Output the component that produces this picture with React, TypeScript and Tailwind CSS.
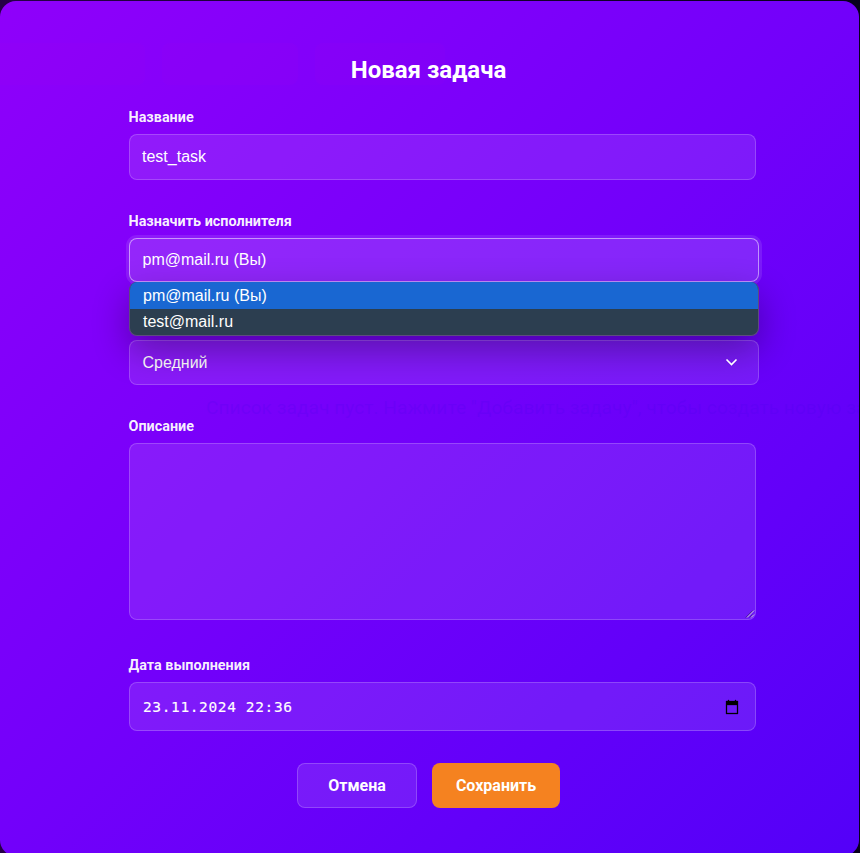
import type { ReactNode } from "react";

const control =
  "rounded-[8px] border border-white/20 bg-white/10 text-[16px] text-white font-['Liberation_Sans',Arial,sans-serif]";

function Label({ children }: { children: ReactNode }) {
  return (
    <div className="-ml-[0.5px] h-[17px] whitespace-nowrap text-[14.4px] font-bold leading-[17px] text-white/95">
      {children}
    </div>
  );
}

function AssigneeOptions() {
  return (
    <div className="absolute left-0 top-[44px] z-10 h-[54px] w-[630px] overflow-hidden rounded-[8px] border border-t-0 border-[#5d4b80] bg-[#2c3e50] font-['Liberation_Sans',Arial,sans-serif] text-[16px] leading-[26px] text-white shadow-[0_14px_36px_rgba(0,0,0,0.32)]">
      <div className="h-[27px] bg-[#1967d2] pl-[13px] pt-px">pm@mail.ru (Вы)</div>
      <div className="h-[26px] pl-[13px] leading-[25px]">test@mail.ru</div>
    </div>
  );
}

export default function App() {
  return (
    <div className="h-[853px] w-[860px] overflow-hidden bg-[#1d003c] bg-linear-to-r from-[#260046] to-[#08001c] pt-px font-[Roboto,sans-serif]">
      <div className="relative h-[855px] w-[859px] overflow-hidden rounded-[16px] bg-[linear-gradient(135deg,#8f00fa_0%,#7200fa_50%,#5300f8_100%)]">
        <div className="absolute left-0 top-[42px] flex gap-[17px]">
          <div className="h-[42px] w-[145px] rounded-r-[8px] bg-[#a000dc]/8" />
          <div className="h-[42px] w-[136px] rounded-[8px] bg-[#a000dc]/8" />
          <div className="h-[42px] w-[130px] rounded-[8px] bg-[#a000dc]/8" />
        </div>
        <div className="absolute left-[206px] top-[395px] whitespace-nowrap text-[19.2px] leading-[24px] text-[#3c00e0]/15">
          Список задач пуст. Нажмите "Добавить задачу", чтобы создать новую задачу
        </div>

        <form className="relative flex flex-col pl-[129px]">
          <h2 className="mr-[131px] mt-[54px] h-[30px] text-center text-[24px] font-bold leading-[30px] text-white">
            Новая задача
          </h2>

          <div className="mt-[24px]">
            <Label>Название</Label>
            <div className={`${control} mt-[8px] flex h-[46px] w-[627px] items-center px-[12px]`}>
              test_task
            </div>
          </div>

          <div className="mt-[33px]">
            <Label>Назначить исполнителя</Label>
            <div className="relative mt-[8px]">
              <div className="flex h-[44px] w-[630px] items-center rounded-[8px] border border-white/50 bg-white/15 px-[12.5px] font-['Liberation_Sans',Arial,sans-serif] text-[16px] text-white shadow-[0_0_0_3px_rgba(255,255,255,0.1)]">
                pm@mail.ru (Вы)
              </div>
              <AssigneeOptions />
            </div>
          </div>

          <div className="mt-[33px]">
            <Label>Приоритет</Label>
            <div className={`${control} mt-[8px] flex h-[45px] w-[630px] items-center justify-between pl-[12.5px] pr-[20px]`}>
              <span>Средний</span>
              <svg className="relative z-20 mb-px" width="14" height="10" viewBox="0 0 14 10" fill="none" stroke="white" strokeWidth="1.6">
                <path d="M2.5 2.5 7.5 7.5 12.5 2.5" />
              </svg>
            </div>
          </div>

          <div className="mt-[33px]">
            <Label>Описание</Label>
            <div className={`${control} mt-[8px] flex h-[177px] w-[627px] items-end justify-end`}>
              <svg width="10" height="10" viewBox="0 0 10 10" fill="none">
                <path d="M1 8.5 8 1.5M5 8.5 8 5.5" stroke="#33106e" />
                <path d="M2 8.5 9 1.5M6 8.5 9 5.5" stroke="#d9c8f5" />
              </svg>
            </div>
          </div>

          <div className="mt-[37px]">
            <Label>Дата выполнения</Label>
            <div className={`${control} mt-[8px] flex h-[49px] w-[627px] items-center justify-between pl-[13px] pr-[16px]`}>
              <span className="pt-[2px] font-['DejaVu_Sans_Mono',monospace] text-[14.5px] tracking-[0.62px] [-webkit-text-stroke:0.15px_white]">
                23.11.2024 22:36
              </span>
              <svg width="14" height="16" viewBox="0 0 14 16" fill="black">
                <path d="M1 2H3V1H4V2H10V1H11V2H13V15H1ZM2 6V14H12V6Z" fillRule="evenodd" stroke="black" strokeWidth=".3" />
              </svg>
            </div>
          </div>

          <div className="ml-[168px] mt-[32px] flex gap-[15px] text-[16px] font-bold text-white">
            <button type="button" className="h-[45px] w-[120px] rounded-[8px] border border-white/20 bg-white/10">
              Отмена
            </button>
            <button type="button" className="h-[45px] w-[128px] rounded-[8px] bg-[#f58220]">
              Сохранить
            </button>
          </div>
        </form>
      </div>
    </div>
  );
}
